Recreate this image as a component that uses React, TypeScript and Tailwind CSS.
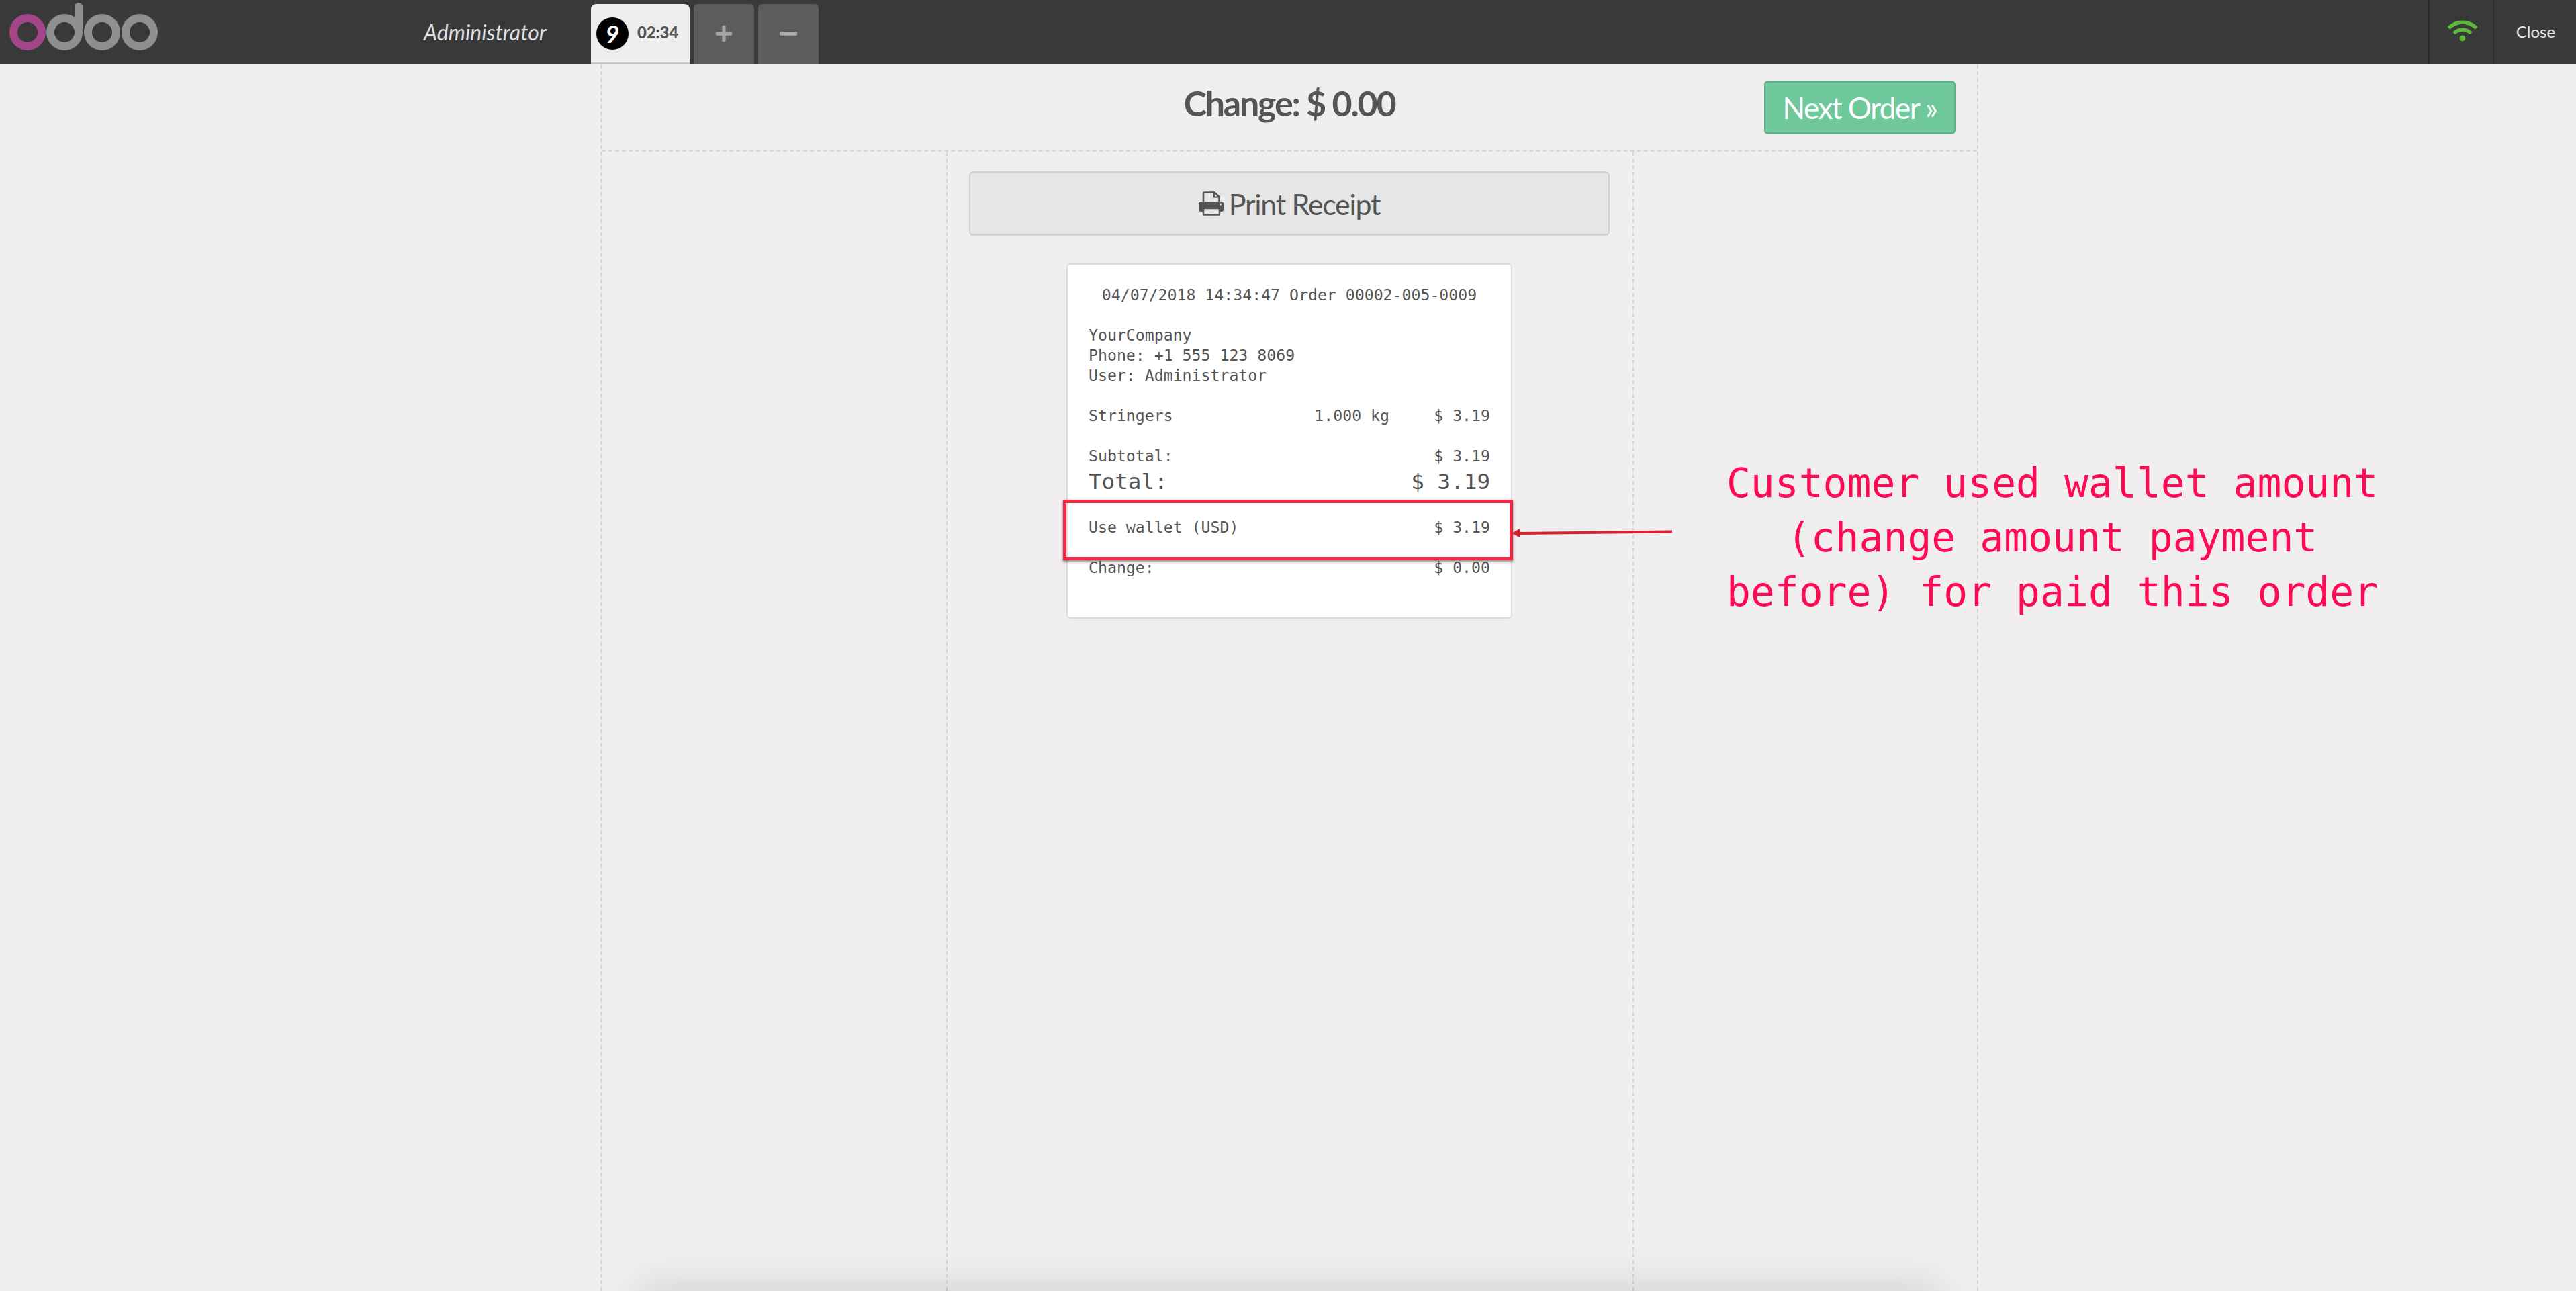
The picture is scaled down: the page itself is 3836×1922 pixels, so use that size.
import React from 'react';
import { FaPlus, FaMinus, FaWifi } from 'react-icons/fa';

const Logo = () => (
  <svg width="222" height="72" viewBox="0 0 222 72" className="ml-[14px] mt-[4px] shrink-0 self-start">
    <circle cx="27" cy="44" r="21" fill="none" stroke="#a24689" strokeWidth="12" />
    <circle cx="82" cy="44" r="21" fill="none" stroke="#8f8f8f" strokeWidth="12" />
    <rect x="97" y="0" width="12" height="44" rx="6" fill="#8f8f8f" />
    <circle cx="138" cy="44" r="21" fill="none" stroke="#8f8f8f" strokeWidth="12" />
    <circle cx="194" cy="44" r="21" fill="none" stroke="#8f8f8f" strokeWidth="12" />
  </svg>
);

const PrinterIcon = () => (
  <svg width="37" height="36" viewBox="0 0 37 36" className="shrink-0">
    <path d="M7 16V3.5A2 2 0 0 1 9 1.5H23.5L30.5 8V16" fill="none" stroke="#555555" strokeWidth="2.6" />
    <path d="M23 2V8.5H30" fill="none" stroke="#555555" strokeWidth="2.2" />
    <rect x="0" y="15" width="37" height="15" rx="3" fill="#555555" />
    <rect x="7" y="25" width="24" height="9.5" rx="1.5" fill="#e6e6e6" stroke="#555555" strokeWidth="2.6" />
    <circle cx="32.5" cy="19" r="1.5" fill="#e6e6e6" />
  </svg>
);

const ReceiptRow = ({ label, value }: { label: string; value: string }) => (
  <div className="flex justify-between">
    <span>{label}</span>
    <span>{value}</span>
  </div>
);

export default function App() {
  return (
    <div className="relative h-[1922px] w-full overflow-hidden bg-[#f0eeee] font-['Lato',sans-serif] text-[#555555]">
      {/* Top bar */}
      <header className="flex h-24 items-stretch bg-[#393939]">
        <Logo />
        <div className="ml-[395px] mt-[28px] w-[200px] text-[32px] italic leading-[40px] text-[#dfdfe4]">Administrator</div>
        <div className="ml-[49px] mt-[6px] flex gap-[6px]">
          <div className="flex w-[147px] rounded-t-lg border-b-[3px] border-[#c5c5c5] bg-[#eeeeee] pl-2 pt-5">
            <span className="flex h-12 w-12 items-center justify-center rounded-full bg-black text-[36px] font-bold italic leading-none text-white">9</span>
            <span className="ml-[13px] mt-[7px] text-[24px] font-black leading-[30px] tracking-[-0.2px] text-[#555555]">02:34</span>
          </div>
          <div className="flex w-[90px] items-center justify-center rounded-t-md bg-[#5c5c5c] pb-[2px] text-[#a5a5a5]">
            <FaPlus size={28} />
          </div>
          <div className="flex w-[90px] items-center justify-center rounded-t-md bg-[#5c5c5c] pb-[2px] text-[#a9a9a9]">
            <FaMinus size={30} />
          </div>
        </div>
        <div className="ml-auto flex">
          <div className="flex w-[98px] items-center justify-center border-x-2 border-[#292929] pb-[4px] pl-[4px] text-[#5cb83c]">
            <FaWifi size={44} />
          </div>
          <div className="flex w-[122px] items-center justify-center pb-[2px] pl-[2px] text-[24px] text-[#e4e4e8]">Close</div>
        </div>
      </header>

      {/* Screen */}
      <main className="ml-[894px] w-[2052px] border-x-2 border-dashed border-[#d8d6d6]">
        <div className="grid h-[130px] grid-cols-[515px_1fr_515px] border-b-2 border-dashed border-[#d8d6d6]">
          <div />
          <h1 className="pb-[7px] pt-[26px] text-center text-[52px] font-bold leading-[62px] tracking-[-2.2px] text-[#555555]">Change: $ 0.00</h1>
          <div className="flex items-start justify-end pr-[32px] pt-[24px]">
            <button className="flex h-20 w-[285px] items-center justify-center rounded-md border-x-2 border-y-[3px] border-[#60ae87] bg-[#6ec89b] text-[44px] leading-none tracking-[-1.5px] text-white">
              Next Order »
            </button>
          </div>
        </div>

        <div className="grid h-[1696px] grid-cols-[513px_1024px_1fr]">
          <div />
          <div className="border-x-2 border-dashed border-[#d8d6d6] pl-[32px] pr-[34px] pt-[29px]">
            <button className="flex h-24 w-full items-center justify-center gap-[8px] rounded-md border-2 border-b-[3px] border-t-[3px] border-[#d3d3d3] bg-[#e6e6e6] text-[43px] leading-none tracking-[-1.3px] text-[#555555]">
              <PrinterIcon />
              Print Receipt
            </button>

            {/* Receipt */}
            <div className="mx-auto mt-[41px] h-[529px] w-[664px] rounded-md border-2 border-[#dcdada] bg-white px-[31px] pt-[30px] font-['DejaVu_Sans_Mono',monospace] text-[23.2px] leading-[30px] text-[#555555]">
              <div className="text-center">04/07/2018 14:34:47 Order 00002-005-0009</div>
              <div className="mt-[30px]">
                YourCompany
                <br />
                Phone: +1 555 123 8069
                <br />
                User: Administrator
              </div>
              <div className="mt-[30px] flex">
                <span className="flex-1">Stringers</span>
                <span>1.000 kg</span>
                <span className="w-[150px] text-right">$ 3.19</span>
              </div>
              <div className="mt-[30px]">
                <ReceiptRow label="Subtotal:" value="$ 3.19" />
              </div>
              <div className="flex justify-between text-[32.6px] leading-[46px]">
                <span>Total:</span>
                <span>$ 3.19</span>
              </div>
              <div className="mt-[30px]">
                <ReceiptRow label="Use wallet (USD)" value="$ 3.19" />
              </div>
              <div className="mt-[30px]">
                <ReceiptRow label="Change:" value="$ 0.00" />
              </div>
            </div>
          </div>
          <div />
        </div>
      </main>

      {/* Annotation over the receipt */}
      <div className="absolute left-[1583px] top-[744px] h-[90px] w-[670px] border-[5px] border-[#ee2a47] shadow-[0_2px_4px_rgba(0,0,0,0.5)]" />
      <svg className="absolute left-[2250px] top-[780px]" width="242" height="24" viewBox="0 0 242 24">
        <path d="M240 11.5 L12 14" stroke="#d9202f" strokeWidth="4" fill="none" />
        <path d="M1 14 L13 7 L13 20 Z" fill="#d9202f" />
      </svg>
      <div className="absolute left-[2556px] top-[679px] w-[1000px] whitespace-pre text-center font-['DejaVu_Sans_Mono',monospace] text-[59.7px] leading-[81px] text-[#ff0a54]">
        {'Customer used wallet amount\n(change amount payment\nbefore) for paid this order'}
      </div>

      {/* Bar below the fold, only its shadow shows */}
      <div className="absolute left-[970px] top-[1934px] h-20 w-[1900px] shadow-[0_0_60px_20px_rgba(0,0,0,0.12)]" />
    </div>
  );
}
